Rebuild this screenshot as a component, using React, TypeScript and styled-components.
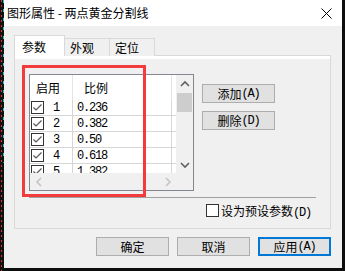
import React from "react";
import styled, { createGlobalStyle, css } from "styled-components";

const GlobalStyle = createGlobalStyle`
  html, body {
    margin: 0;
    padding: 0;
    background: #0d0d0d;
  }
  body {
    font-family: "Noto Sans CJK SC", "Liberation Sans", sans-serif;
    font-size: 12px;
    color: #000;
  }
`;

const Desktop = styled.div`
  width: 345px;
  height: 271px;
  display: flex;
  overflow: hidden;
  background: #0d0d0d;
`;

const DesktopEdge = styled.div`
  width: 4px;
  flex: none;
  background:
    repeating-linear-gradient(to bottom, #e33232 0 2px, transparent 2px 5px) 1px 0 / 1px 100% no-repeat,
    repeating-linear-gradient(to bottom, #24c6d6 0 3px, transparent 3px 9px) 3px 0 / 1px 60% no-repeat,
    #111;
`;

const Window = styled.div`
  width: 338px;
  height: 268px;
  flex: none;
  display: flex;
  flex-direction: column;
  background: #f0f0f0;
`;

const TitleBar = styled.div`
  height: 26px;
  flex: none;
  display: flex;
  align-items: center;
  justify-content: space-between;
  padding: 0 10px 0 3px;
  background: #fff;
`;

const Title = styled.span`
  font-size: 12px;
  line-height: 1;
`;

const Body = styled.div`
  flex: 1;
  display: flex;
  flex-direction: column;
  padding: 9px 11px 0 10px;
`;

const TabStrip = styled.div`
  display: flex;
  align-items: flex-end;
  height: 21px;
  margin-bottom: -1px;
  position: relative;
  z-index: 1;
`;

const Tab = styled.div<{ $active?: boolean }>`
  box-sizing: border-box;
  display: flex;
  align-items: center;
  border: 1px solid #d9d9d9;
  border-bottom: none;
  font-size: 12px;
  ${(p) =>
    p.$active
      ? css`
          width: 51px;
          height: 21px;
          padding-left: 7px;
          background: #fff;
        `
      : css`
          width: 46px;
          height: 18px;
          padding-left: 5px;
          margin-left: -1px;
          background: #f0f0f0;
        `}
`;

const Panel = styled.div`
  position: relative;
  box-sizing: border-box;
  height: 174px;
  border: 1px solid #d9d9d9;
  background: #f0f0f0;
  box-shadow: inset 0 3px 0 #fff;
  padding: 18px 13px 0 14px;
`;

const Annotation = styled.div`
  position: absolute;
  left: 7px;
  top: 9px;
  width: 124px;
  height: 132px;
  box-sizing: border-box;
  border: 3px solid #f43b3b;
  pointer-events: none;
`;

const TopRow = styled.div`
  display: flex;
  align-items: flex-start;
`;

const ListBox = styled.div`
  box-sizing: border-box;
  width: 165px;
  height: 117px;
  border: 1px solid #828790;
  background: #fff;
  display: grid;
  grid-template-columns: 146px 17px;
  grid-template-rows: 98px 17px;
`;

const ListArea = styled.div`
  overflow: hidden;
`;

const HeaderRow = styled.div`
  display: grid;
  grid-template-columns: 43px 99px 1fr;
  height: 25px;
`;

const HeaderCell = styled.div<{ $pad: number }>`
  display: flex;
  align-items: center;
  padding-left: ${(p) => p.$pad}px;
  border-right: 1px solid #e5e5e5;
  font-size: 12px;
  &:last-child {
    border-right: none;
  }
`;

const Row = styled.div`
  display: grid;
  grid-template-columns: 43px 99px 1fr;
  height: 16px;
  box-sizing: border-box;
  border-bottom: 1px solid #d6d6d6;
`;

const Cell = styled.div`
  display: flex;
  align-items: center;
  border-right: 1px solid #d6d6d6;
  overflow: hidden;
  white-space: nowrap;
  &:last-child {
    border-right: none;
  }
`;

const EnableCell = styled(Cell)`
  padding-left: 1px;
  gap: 9px;
`;

const ValueCell = styled(Cell)`
  padding-left: 4px;
`;

const Mono = styled.span`
  font-family: "Liberation Mono", "DejaVu Sans Mono", monospace;
  font-size: 12px;
  letter-spacing: -1.2px;
`;

const CheckBox = styled.span`
  box-sizing: border-box;
  width: 13px;
  height: 13px;
  flex: none;
  border: 1px solid #333;
  background: #fff;
  display: inline-flex;
  align-items: center;
  justify-content: center;
`;

const VScroll = styled.div`
  background: #f0f0f0;
  display: flex;
  flex-direction: column;
`;

const ScrollArrow = styled.div`
  flex: none;
  width: 17px;
  height: 17px;
  display: flex;
  align-items: center;
  justify-content: center;
`;

const Thumb = styled.div`
  height: 19px;
  margin: 1px 1px 0 1px;
  background: #cdcdcd;
`;

const Track = styled.div`
  flex: 1;
`;

const HScroll = styled.div`
  background: #f0f0f0;
  display: flex;
  justify-content: space-between;
`;

const Corner = styled.div`
  background: #f0f0f0;
`;

const SideButtons = styled.div`
  display: flex;
  flex-direction: column;
  gap: 8px;
  margin-left: 8px;
  padding-top: 10px;
`;

const Button = styled.button<{ $default?: boolean }>`
  box-sizing: border-box;
  width: 73px;
  height: 19px;
  padding: 0;
  margin: 0;
  background: #e1e1e1;
  border: 1px solid #adadad;
  font-family: "Noto Sans CJK SC", "Liberation Sans", sans-serif;
  font-size: 12px;
  line-height: 1;
  color: #000;
  display: flex;
  align-items: center;
  justify-content: center;
  ${(p) =>
    p.$default &&
    css`
      border: 2px solid #0078d7;
    `}
`;

const Separator = styled.div`
  width: 287px;
  height: 1px;
  margin-top: 6px;
  background: #a0a0a0;
`;

const OptionRow = styled.label`
  display: flex;
  align-items: center;
  justify-content: flex-end;
  gap: 2px;
  margin-top: 6px;
  padding-right: 6px;
  font-size: 12px;
  height: 13px;
`;

const Footer = styled.div`
  display: flex;
  justify-content: flex-end;
  gap: 8px;
  margin-top: 8px;
`;

const FooterButton = styled(Button)`
  height: 19px;
`;

const Chevron = ({ dir, color }: { dir: "up" | "down" | "left" | "right"; color: string }) => {
  const pts = {
    up: "1,6 5,2 9,6",
    down: "1,2 5,6 9,2",
    left: "6,1 2,5 6,9",
    right: "2,1 6,5 2,9",
  }[dir];
  const horiz = dir === "left" || dir === "right";
  return (
    <svg width={horiz ? 8 : 10} height={horiz ? 10 : 8} viewBox={horiz ? "0 0 8 10" : "0 0 10 8"}>
      <polyline points={pts} fill="none" stroke={color} strokeWidth="1.6" />
    </svg>
  );
};

const Check = () => (
  <CheckBox>
    <svg width="11" height="11" viewBox="0 0 11 11">
      <polyline points="1.5,5.5 4,8 9.5,2.5" fill="none" stroke="#555" strokeWidth="1.2" />
    </svg>
  </CheckBox>
);

const rows = [
  { n: "1", v: "0.236" },
  { n: "2", v: "0.382" },
  { n: "3", v: "0.50" },
  { n: "4", v: "0.618" },
  { n: "5", v: "1.382" },
];

export default function App() {
  return (
    <>
      <GlobalStyle />
      <Desktop>
        <DesktopEdge />
        <Window>
          <TitleBar>
            <Title>图形属性 - 两点黄金分割线</Title>
            <svg width="11" height="11" viewBox="0 0 11 11">
              <path d="M0.5 0.5 L10.5 10.5 M10.5 0.5 L0.5 10.5" stroke="#000" strokeWidth="1" />
            </svg>
          </TitleBar>
          <Body>
            <TabStrip>
              <Tab $active>参数</Tab>
              <Tab>外观</Tab>
              <Tab>定位</Tab>
            </TabStrip>
            <Panel>
              <TopRow>
                <ListBox>
                  <ListArea>
                    <HeaderRow>
                      <HeaderCell $pad={6}>启用</HeaderCell>
                      <HeaderCell $pad={11}>比例</HeaderCell>
                      <HeaderCell $pad={0} />
                    </HeaderRow>
                    {rows.map((r) => (
                      <Row key={r.n}>
                        <EnableCell>
                          <Check />
                          <Mono>{r.n}</Mono>
                        </EnableCell>
                        <ValueCell>
                          <Mono>{r.v}</Mono>
                        </ValueCell>
                        <Cell />
                      </Row>
                    ))}
                  </ListArea>
                  <VScroll>
                    <ScrollArrow>
                      <Chevron dir="up" color="#606060" />
                    </ScrollArrow>
                    <Thumb />
                    <Track />
                    <ScrollArrow>
                      <Chevron dir="down" color="#606060" />
                    </ScrollArrow>
                  </VScroll>
                  <HScroll>
                    <ScrollArrow>
                      <Chevron dir="left" color="#c4c4c4" />
                    </ScrollArrow>
                    <ScrollArrow>
                      <Chevron dir="right" color="#c4c4c4" />
                    </ScrollArrow>
                  </HScroll>
                  <Corner />
                </ListBox>
                <SideButtons>
                  <Button>
                    添加<Mono>(A)</Mono>
                  </Button>
                  <Button>
                    删除<Mono>(D)</Mono>
                  </Button>
                </SideButtons>
              </TopRow>
              <Separator />
              <OptionRow>
                <CheckBox />
                <span>
                  设为预设参数<Mono>(D)</Mono>
                </span>
              </OptionRow>
              <Annotation />
            </Panel>
            <Footer>
              <FooterButton>确定</FooterButton>
              <FooterButton>取消</FooterButton>
              <FooterButton $default>
                应用<Mono>(A)</Mono>
              </FooterButton>
            </Footer>
          </Body>
        </Window>
      </Desktop>
    </>
  );
}
